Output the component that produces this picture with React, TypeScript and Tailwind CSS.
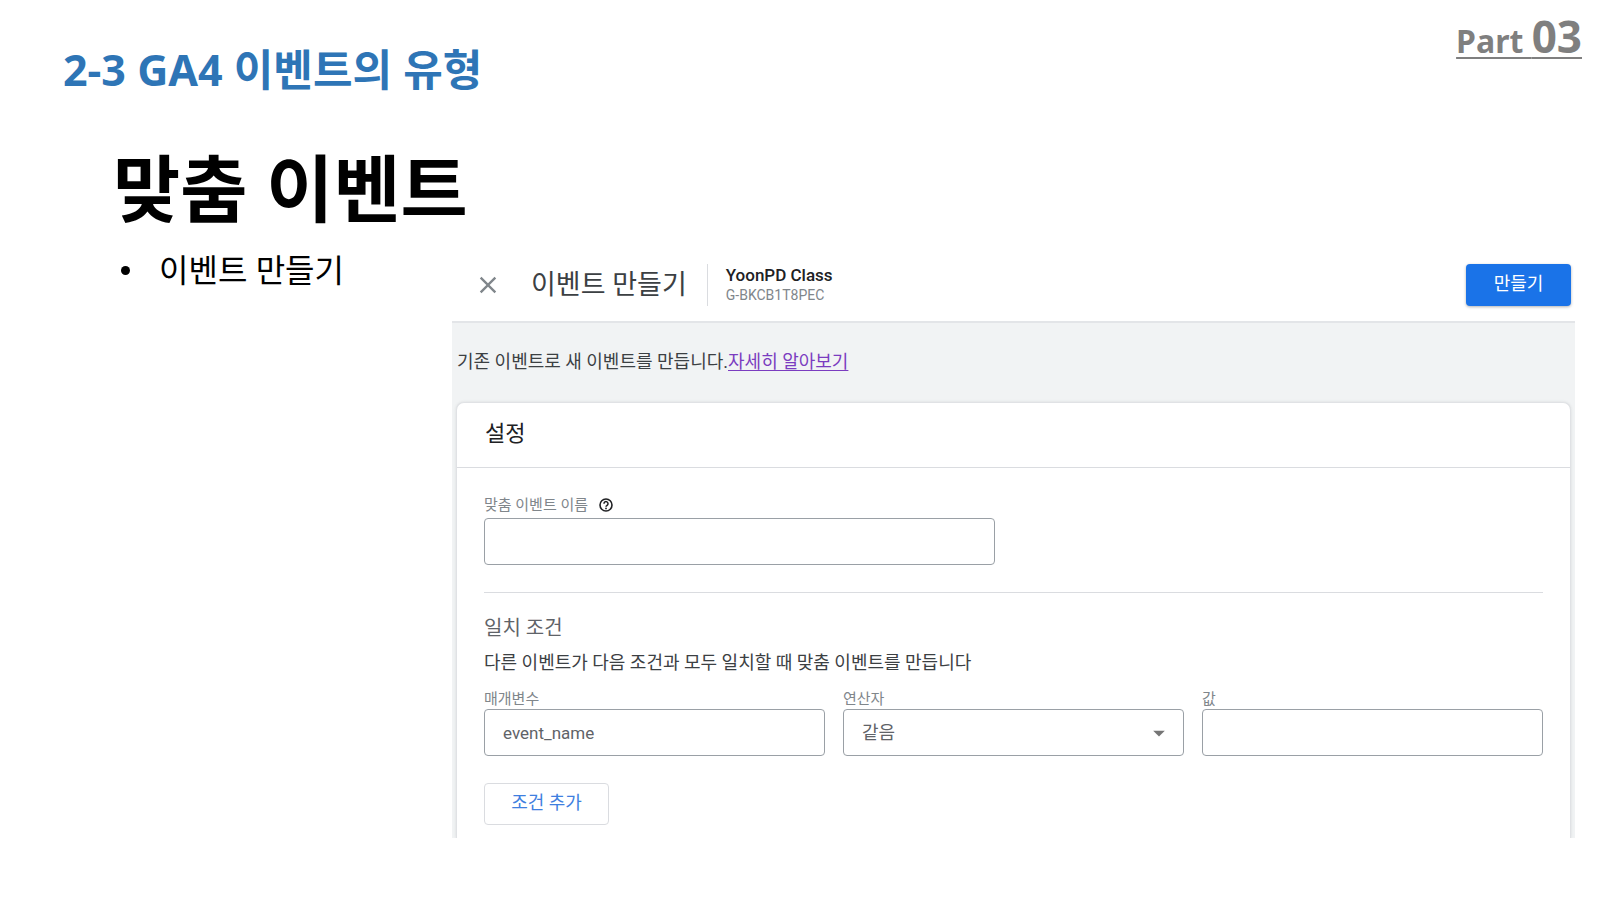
import { useState } from "react";
import { MdArrowDropDown, MdClose } from "react-icons/md";

const fieldClass =
    "block w-full h-[47px] px-[18px] rounded border border-[#9aa0a6] bg-white text-[#5f6368] outline-none focus:border-[#1a73e8]";
const labelClass = "text-[15px] leading-5 text-[#80868b]";

function HelpIcon() {
    return (
        <svg viewBox="0 0 16 16" className="w-4 h-4 text-[#202124]" fill="none" stroke="currentColor" aria-hidden="true">
            <circle cx="8" cy="8" r="6" strokeWidth="1.6" />
            <path d="M6 6.7a2 2 0 1 1 3.1 1.6C8.4 8.8 8 9.1 8 9.8" strokeWidth="1.5" />
            <circle cx="8" cy="11.4" r="0.9" fill="currentColor" stroke="none" />
        </svg>
    );
}

function EventForm() {
    const [eventName, setEventName] = useState("");
    const [parameter, setParameter] = useState("event_name");
    const [operator, setOperator] = useState("equals");
    const [value, setValue] = useState("");

    return (
        <section className="flex-1 min-w-0 mr-[25px] font-[Roboto,'Noto_Sans_CJK_KR',sans-serif] text-[#3c4043]">
            {/* Toolbar */}
            <header className="flex items-center h-[71px] pb-1 pl-[22px] pr-1 border-b-2 border-[#e3e5e8]">
                <button type="button" aria-label="닫기" className="text-[#80868b]">
                    <MdClose className="w-7 h-7" />
                </button>
                <h3 className="ml-[29px] text-[27px] leading-10">이벤트 만들기</h3>
                <div className="ml-5 pl-[18px] h-[42px] border-l border-[#dadce0] flex flex-col justify-center">
                    <p className="text-[17px] leading-5 font-medium text-[#202124]">YoonPD Class</p>
                    <p className="text-sm leading-5 text-[#80868b]">G-BKCB1T8PEC</p>
                </div>
                <button
                    type="button"
                    className="ml-auto w-[105px] h-[42px] pb-0.5 rounded bg-[#1a73e8] text-white text-lg leading-6 shadow-[0_1px_3px_rgba(60,64,67,0.4)]"
                >
                    만들기
                </button>
            </header>

            <div className="bg-[#f1f3f4] px-1 overflow-hidden">
                <p className="pt-[25px] pb-[26px] pl-px text-lg leading-7">
                    기존 이벤트로 새 이벤트를 만듭니다.
                    <a href="#learn-more" className="text-[#7b3cc0] underline underline-offset-2">자세히 알아보기</a>
                </p>

                {/* Settings card, cut off by the bottom of the slide */}
                <div className="rounded-t-lg border border-b-0 border-[#e0e2e5] bg-white shadow-[0_0_3px_rgba(60,64,67,0.12)]">
                    <h4 className="px-7 pt-[15px] pb-[17px] text-[22px] leading-8 text-[#202124] border-b border-[#dadce0]">설정</h4>

                    <form className="px-[27px] pt-[27px] pb-[13px]" onSubmit={(e) => e.preventDefault()}>
                        <div className="max-w-[511px] mb-[27px]">
                            <div className="flex items-center gap-2.5 mb-[3px]">
                                <label htmlFor="event-name" className={labelClass}>맞춤 이벤트 이름</label>
                                <HelpIcon />
                            </div>
                            <input
                                id="event-name"
                                type="text"
                                value={eventName}
                                onChange={(e) => setEventName(e.target.value)}
                                className={`${fieldClass} text-lg`}
                            />
                        </div>

                        <div className="border-t border-[#dadce0] pt-[21px]">
                            <h5 className="text-xl leading-7 text-[#5f6368]">일치 조건</h5>
                            <p className="mt-[7px] text-lg leading-7">다른 이벤트가 다음 조건과 모두 일치할 때 맞춤 이벤트를 만듭니다</p>
                        </div>

                        <div className="grid grid-cols-3 gap-[18px] mt-3 mb-[27px]">
                            <div className="flex flex-col">
                                <label htmlFor="parameter" className={labelClass}>매개변수</label>
                                <input
                                    id="parameter"
                                    type="text"
                                    value={parameter}
                                    onChange={(e) => setParameter(e.target.value)}
                                    className={`${fieldClass} text-[17px]`}
                                />
                            </div>
                            <div className="flex flex-col">
                                <label htmlFor="operator" className={labelClass}>연산자</label>
                                <div className="relative">
                                    <select
                                        id="operator"
                                        value={operator}
                                        onChange={(e) => setOperator(e.target.value)}
                                        className={`${fieldClass} appearance-none text-lg`}
                                    >
                                        <option value="equals">같음</option>
                                    </select>
                                    <MdArrowDropDown className="absolute right-[11px] top-2.5 w-7 h-7 text-[#757575] pointer-events-none" />
                                </div>
                            </div>
                            <div className="flex flex-col">
                                <label htmlFor="value" className={labelClass}>값</label>
                                <input
                                    id="value"
                                    type="text"
                                    value={value}
                                    onChange={(e) => setValue(e.target.value)}
                                    className={`${fieldClass} text-lg`}
                                />
                            </div>
                        </div>

                        <button
                            type="button"
                            className="block w-[125px] h-[42px] pb-0.5 rounded border border-[#dadce0] text-lg leading-6 text-[#3f7fdf]"
                        >
                            조건 추가
                        </button>
                    </form>
                </div>
            </div>
        </section>
    );
}

export default function App() {
    return (
        <main className="min-h-screen bg-white font-['Noto_Sans','Noto_Sans_CJK_KR',sans-serif] text-black">
            <div className="flex justify-between pl-[63px] pr-[18px]">
                <h1 className="pt-10 text-[43px] leading-[60px] font-bold text-[#2e75b6]">2-3 GA4 이벤트의 유형</h1>
                <p className="pt-1.5 text-[32px] leading-[60px] font-bold text-[#7f7f7f] underline underline-offset-4 decoration-2">
                    Part <span className="text-[44px]">03</span>
                </p>
            </div>

            <h2 className="mt-9 pl-[113px] text-[73px] leading-[104px] font-bold">맞춤 이벤트</h2>

            <div className="flex items-start mt-3">
                <ul className="w-[452px] shrink-0 pl-[121px]">
                    <li className="flex items-center text-[32px] leading-9">
                        <span className="w-[9px] h-[9px] mr-[29px] rounded-full bg-black" />
                        이벤트 만들기
                    </li>
                </ul>
                <EventForm />
            </div>
        </main>
    );
}
